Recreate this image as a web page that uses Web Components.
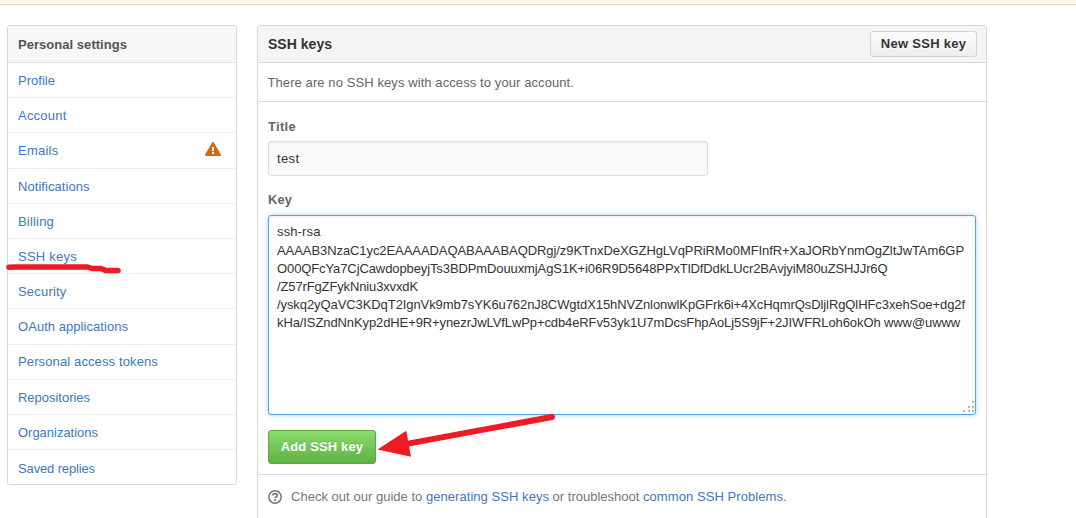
<!DOCTYPE html>
<html lang="en">
<head>
<meta charset="utf-8">
<title>SSH keys</title>
<style>
html,body{margin:0;height:518px;overflow:hidden;background:#fff}
body{font:13px/18.2px "Liberation Sans",Arial,sans-serif;color:#333}
</style>
</head>
<body>
<settings-page></settings-page>
<script>
const define = (name, html, init) => customElements.define(name, class extends HTMLElement {
  constructor() {
    super();
    this.attachShadow({mode: 'open'}).innerHTML = html;
  }
  connectedCallback() { if (init) init.call(this); }
});

/* One line of text, tracked so that it spans the width given in "w". */
define('text-run', `<style>:host{display:inline-block;white-space:pre}</style><slot></slot>`, function () {
  const w = parseFloat(this.getAttribute('w'));
  const n = this.textContent.length;
  this.style.letterSpacing = '0px';
  const natural = this.getBoundingClientRect().width;
  this.style.letterSpacing = ((w - natural) / n).toFixed(4) + 'px';
});

define('nav-item', `<style>
:host{display:flex;box-sizing:border-box;height:35.2px;border-bottom:1px solid #eee;padding:2px 15px 0 10px;align-items:center;justify-content:space-between;color:#4078c0}
:host(:last-of-type){border-bottom:0}
</style><slot></slot><slot name="icon"></slot>`);

define('alert-icon', `<style>:host{display:block;width:16px;height:16px;margin-top:-5px}svg{display:block}</style>
<svg width="16" height="16" viewBox="0 0 16 16"><path fill="#d26911" fill-rule="evenodd" d="M8.9 1.5a1.05 1.05 0 0 0-1.8 0L.15 13.6c-.3.6 0 1.4.9 1.4h13.9c.9 0 1.2-.8.9-1.4zM9 13H7v-2h2zM9 10H7V6h2z"/></svg>`);

define('help-icon', `<style>:host{display:block;width:14px;height:14px}svg{display:block}</style>
<svg width="14" height="14" viewBox="0 0 14 14" fill="none" stroke="#767676"><circle cx="7" cy="7" r="6.2" stroke-width="1.5"/><path stroke-width="1.7" d="M4.7 5.5c.1-1.3 1-1.9 2.3-1.9s2.3.7 2.3 1.8c0 1.4-2.1 1.4-2.1 2.9"/><path stroke-width="1.8" d="M7.1 9.2v1.7"/></svg>`);

define('side-menu', `<style>
:host{display:block;box-sizing:border-box;width:230px;height:460px;border:1px solid #d8d8d8;border-radius:3px;overflow:hidden}
header{box-sizing:border-box;height:37px;padding:10px 10px 0;background:#f7f7f7;border-bottom:1px solid #e5e5e5;font-weight:bold;color:#555}
</style>
<header><text-run w="109">Personal settings</text-run></header>
<nav>
<nav-item><text-run w="37">Profile</text-run></nav-item>
<nav-item><text-run w="48.5">Account</text-run></nav-item>
<nav-item><text-run w="40.5">Emails</text-run><alert-icon slot="icon"></alert-icon></nav-item>
<nav-item><text-run w="71.5">Notifications</text-run></nav-item>
<nav-item><text-run w="36">Billing</text-run></nav-item>
<nav-item><text-run w="59">SSH keys</text-run></nav-item>
<nav-item><text-run w="48.5">Security</text-run></nav-item>
<nav-item><text-run w="110">OAuth applications</text-run></nav-item>
<nav-item><text-run w="140">Personal access tokens</text-run></nav-item>
<nav-item><text-run w="72">Repositories</text-run></nav-item>
<nav-item><text-run w="80">Organizations</text-run></nav-item>
<nav-item><text-run w="77">Saved replies</text-run></nav-item>
</nav>`);

define('ui-button', `<style>
:host{display:flex;box-sizing:border-box;align-items:center;justify-content:center;width:107px;height:26px;padding-top:1px;border:1px solid #d5d5d5;border-radius:3px;background:linear-gradient(#fcfcfc,#eee);font-size:13px;font-weight:bold;color:#333;text-shadow:0 1px 0 rgba(255,255,255,.9)}
:host([primary]){width:108px;height:34px;padding-top:0;border-color:#5ca941;background:linear-gradient(#8add6d,#60b044);color:#fff;text-shadow:0 -1px 0 rgba(0,0,0,.15)}
</style><slot></slot>`);

define('title-field', `<style>
:host{display:flex;box-sizing:border-box;width:440px;height:35px;padding:2px 8px 0;align-items:center;border:1px solid #ddd;border-radius:3px;background:#fafafa;box-shadow:inset 0 1px 2px rgba(0,0,0,.075)}
</style><slot></slot>`);

define('key-field', `<style>
:host{display:flex;flex-direction:column;align-items:flex-start;position:relative;box-sizing:border-box;width:708px;height:200px;padding:7.4px 8px;border:1px solid #51a7e8;border-radius:3px;background:#fff;box-shadow:inset 0 1px 2px rgba(0,0,0,.075),0 0 5px rgba(81,167,232,.5)}
svg{position:absolute;right:0;bottom:1px}
</style><slot></slot>
<svg width="12" height="12" fill="#b8b8b8"><path d="M9 0h2v2H9zM5 5h2v2H5zM9 5h2v2H9zM0 9h2v2H0zM5 9h2v2H5zM9 9h2v2H9z"/></svg>`);

define('keys-panel', `<style>
:host{display:block;box-sizing:border-box;width:730px;height:520px;border:1px solid #d8d8d8;border-radius:3px;overflow:hidden}
header{display:flex;box-sizing:border-box;height:37px;padding:0 9px 0 10px;align-items:center;justify-content:space-between;background:#f5f5f5;border-bottom:1px solid #d8d8d8;font-size:14px;font-weight:bold}
.empty{box-sizing:border-box;height:39px;padding:11px 10px 0 9.5px;border-bottom:1px solid #d8d8d8;color:#666}
form{display:flex;flex-direction:column;box-sizing:border-box;height:373px;padding:15px 10px 0;border-bottom:1px solid #d8d8d8}
label{height:24px;line-height:19px;font-weight:bold;color:#666}
title-field{margin-bottom:14px}
title-field+label{height:25px}
key-field{margin-bottom:15px}
footer{display:flex;padding:13px 10px 0;color:#767676}
help-icon{margin:2px 9px 0 0}
a{color:#4078c0}
</style>
<header><text-run w="64">SSH keys</text-run><ui-button><text-run w="85.5">New SSH key</text-run></ui-button></header>
<div class="empty"><text-run w="306.5">There are no SSH keys with access to your account.</text-run></div>
<form>
<label><text-run w="28">Title</text-run></label>
<title-field><text-run w="22.5">test</text-run></title-field>
<label><text-run w="24">Key</text-run></label>
<key-field><text-run w="43.5">ssh-rsa</text-run>
<text-run w="687">AAAAB3NzaC1yc2EAAAADAQABAAABAQDRgj/z9KTnxDeXGZHgLVqPRiRMo0MFInfR+XaJORbYnmOgZltJwTAm6GP</text-run>
<text-run w="610.5">O00QFcYa7CjCawdopbeyjTs3BDPmDouuxmjAgS1K+i06R9D5648PPxTlDfDdkLUcr2BAvjyiM80uZSHJJr6Q</text-run>
<text-run w="141">/Z57rFgZFykNniu3xvxdK</text-run>
<text-run w="688">/yskq2yQaVC3KDqT2IgnVk9mb7sYK6u762nJ8CWgtdX15hNVZnlonwlKpGFrk6i+4XcHqmrQsDljlRgQlHFc3xehSoe+dg2f</text-run>
<text-run w="683">kHa/ISZndNnKyp2dHE+9R+ynezrJwLVfLwPp+cdb4eRFv53yk1U7mDcsFhpAoLj5S9jF+2JIWFRLoh6okOh www@uwww</text-run></key-field>
<ui-button primary><text-run w="82.5">Add SSH key</text-run></ui-button>
</form>
<footer><help-icon></help-icon><text-run w="135">Check out our guide to </text-run><a><text-run w="123">generating SSH keys</text-run></a><text-run w="94">&nbsp;or troubleshoot </text-run><a><text-run w="140">common SSH Problems</text-run></a><text-run w="4">.</text-run></footer>`);

/* Hand-drawn red marks lying over the page. */
define('red-marks', `<style>:host{position:absolute;left:0;top:0;width:1076px;height:518px;pointer-events:none}svg{display:block}</style>
<svg width="1076" height="518" fill="none" stroke="#ed1c24" stroke-linecap="round" stroke-linejoin="round">
<path stroke-width="5.5" d="M9 267.2 16 266.9H87L92 268.5H101L106 270.6H118"/>
<path stroke-width="6" d="M408 443.6 552 417"/>
<path fill="#ed1c24" stroke="none" d="M377.5 449.5 406.3 430.8 411 456.7z"/>
</svg>`);

define('settings-page', `<style>
:host{display:block;position:relative;height:518px;overflow:hidden}
.flash{height:4px;background:#fff9ea;border-bottom:1px solid #dfd8c2}
main{display:flex;align-items:flex-start;gap:20px;padding:20px 0 0 7px}
</style>
<div class="flash"></div>
<main><side-menu></side-menu><keys-panel></keys-panel></main>
<red-marks></red-marks>`);
</script>
</body>
</html>
